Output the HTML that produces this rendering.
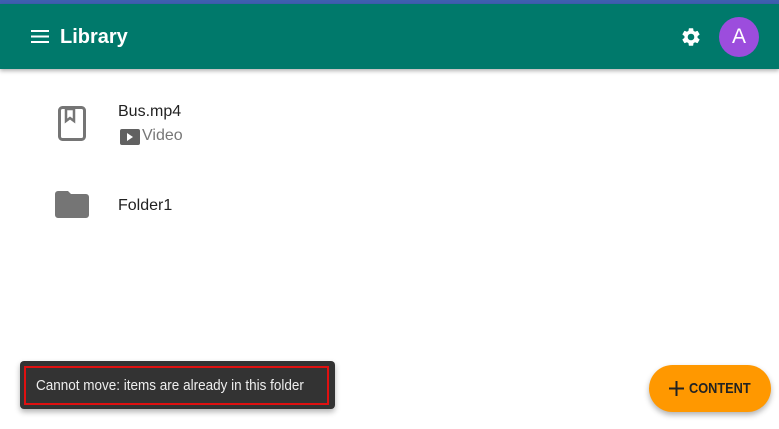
<!DOCTYPE html><html><head><style>
body{margin:0;width:779px;height:429px;background:#fff;font-family:"Liberation Sans",sans-serif;position:relative;overflow:hidden}
.top{position:absolute;left:0;top:0;width:779px;height:4px;background:#3f5fb0}
.bar{position:absolute;left:0;top:4px;width:779px;height:65px;background:#00796b;box-shadow:0 2px 4px rgba(0,0,0,.3)}
.title{position:absolute;left:60px;color:#fff;font-size:20px;font-weight:bold}
.av{position:absolute;left:719px;width:40px;height:40px;border-radius:50%;background:#9c4ddd;color:#fff;font-size:21px;text-align:center;line-height:40px}
.t{position:absolute;font-size:16px;color:#222}
.snack{position:absolute;left:20px;top:361px;width:315px;height:48px;background:#333;border-radius:4px;box-shadow:0 3px 6px rgba(0,0,0,.3)}
.snack div{position:absolute;left:4px;top:5px;height:35px;border:2px solid #e01010;color:#eee;font-size:15px;line-height:35px;padding-left:10px;width:291px;white-space:nowrap}
.snack span{display:inline-block;transform:scaleX(.9);transform-origin:left}
.fab{position:absolute;left:649px;top:365px;width:122px;height:47px;border-radius:24px;background:#ff9800;box-shadow:0 3px 6px rgba(0,0,0,.3)}
.fab span{position:absolute;left:40px;top:15px;font-size:15px;font-weight:bold;color:#222;transform:scaleX(.85);transform-origin:left}
</style></head><body>
<div class="top"></div>
<div class="bar">
<svg style="position:absolute;left:31px;top:26px" width="18" height="13"><rect y="0" width="18" height="2" fill="#fff"/><rect y="5.5" width="18" height="2" fill="#fff"/><rect y="11" width="18" height="2" fill="#fff"/></svg>
<div class="title" style="top:22px">Library</div>
<svg style="position:absolute;left:680px;top:22px" width="22" height="22" viewBox="0 0 24 24"><path fill="#fff" d="M19.14 12.94c.04-.3.06-.61.06-.94s-.02-.64-.07-.94l2.03-1.58a.49.49 0 0 0 .12-.61l-1.920-3.32a.49.49 0 0 0-.59-.22l-2.39.96c-.5-.38-1.03-.7-1.62-.94l-.36-2.54a.48.48 0 0 0-.48-.41h-3.84a.48.48 0 0 0-.47.41l-.36 2.54c-.59.24-1.13.57-1.62.94l-2.39-.96a.48.48 0 0 0-.59.22L2.74 8.87a.47.47 0 0 0 .12.61l2.03 1.58c-.05.3-.09.63-.09.94s.02.64.07.94l-2.03 1.58a.49.49 0 0 0-.12.61l1.92 3.32c.12.22.37.29.59.22l2.39-.96c.5.38 1.03.7 1.62.94l.36 2.54c.05.24.24.41.48.41h3.84c.24 0 .44-.17.47-.41l.36-2.54c.59-.24 1.13-.56 1.62-.94l2.39.96c.22.08.47 0 .59-.22l1.920-3.32a.47.47 0 0 0-.12-.61l-2.01-1.58zM12 15.6A3.6 3.6 0 1 1 12 8.4a3.6 3.6 0 0 1 0 7.2z"/></svg>
<div class="av" style="top:13px">A</div>
</div>
<svg style="position:absolute;left:58px;top:106px" width="28" height="35" viewBox="0 0 28 35"><rect x="1.5" y="1.5" width="25" height="32" rx="3" fill="none" stroke="#757575" stroke-width="3"/><path d="M8 3v12l4-3 4 3V3z" fill="none" stroke="#757575" stroke-width="2.5"/></svg>
<div class="t" style="left:118px;top:103px">Bus.mp4</div>
<svg style="position:absolute;left:120px;top:129px" width="20" height="16"><rect width="20" height="16" rx="2" fill="#616161"/><path d="M7 4v8l6-4z" fill="#fff"/></svg>
<div class="t" style="left:142px;top:127px;color:#777">Video</div>
<svg style="position:absolute;left:55px;top:191px" width="34" height="27" viewBox="0 0 34 27"><path d="M3 0h10l3 3h15a3 3 0 0 1 3 3v18a3 3 0 0 1-3 3H3a3 3 0 0 1-3-3V3a3 3 0 0 1 3-3z" fill="#757575"/></svg>
<div class="t" style="left:118px;top:197px">Folder1</div>
<div class="snack"><div><span>Cannot move: items are already in this folder</span></div></div>
<div class="fab"><svg style="position:absolute;left:20px;top:16px" width="15" height="15"><rect x="6.5" y="0" width="2" height="15" fill="#222"/><rect x="0" y="6.5" width="15" height="2" fill="#222"/></svg><span>CONTENT</span></div>
</body></html>
